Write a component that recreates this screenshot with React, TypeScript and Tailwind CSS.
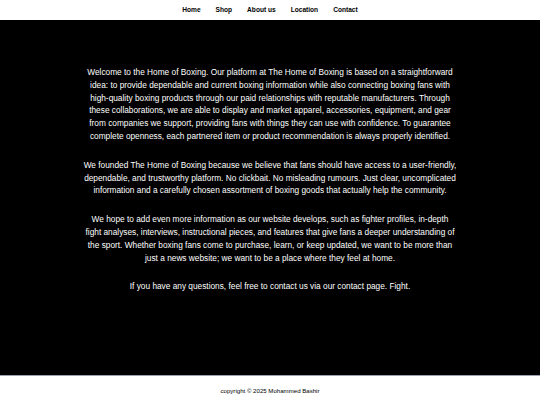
import React from 'react';

const links = ['Home', 'Shop', 'About us', 'Location', 'Contact'];

const paragraphs = [
  'Welcome to the Home of Boxing. Our platform at The Home of Boxing is based on a straightforward idea: to provide dependable and current boxing information while also connecting boxing fans with high-quality boxing products through our paid relationships with reputable manufacturers. Through these collaborations, we are able to display and market apparel, accessories, equipment, and gear from companies we support, providing fans with things they can use with confidence. To guarantee complete openness, each partnered item or product recommendation is always properly identified.',
  'We founded The Home of Boxing because we believe that fans should have access to a user-friendly, dependable, and trustworthy platform. No clickbait. No misleading rumours. Just clear, uncomplicated information and a carefully chosen assortment of boxing goods that actually help the community.',
  'We hope to add even more information as our website develops, such as fighter profiles, in-depth fight analyses, interviews, instructional pieces, and features that give fans a deeper understanding of the sport. Whether boxing fans come to purchase, learn, or keep updated, we want to be more than just a news website; we want to be a place where they feel at home.',
  'If you have any questions, feel free to contact us via our contact page. Fight.',
];

export default function App() {
  return (
    <div className="flex h-[405px] w-[540px] flex-col bg-white font-['Liberation_Sans',Arial,sans-serif]">
      <header className="flex h-[20px] items-center justify-center gap-[15px] bg-white">
        {links.map((l) => (
          <a key={l} className="text-[6.6px] font-bold text-black">
            {l}
          </a>
        ))}
      </header>
      <main className="flex flex-1 flex-col items-center bg-black pt-[46px]">
        <div className="flex w-[373.5px] flex-col gap-[16px] text-center text-[8.3px] leading-[12.8px] text-white">
          {paragraphs.map((p, i) => (
            <p key={i}>{p}</p>
          ))}
        </div>
      </main>
      <footer className="flex h-[30px] items-center justify-center border-t border-gray-400 bg-white">
        <p className="text-[6.1px] text-black">copyright © 2025 Mohammed Bashir</p>
      </footer>
    </div>
  );
}
